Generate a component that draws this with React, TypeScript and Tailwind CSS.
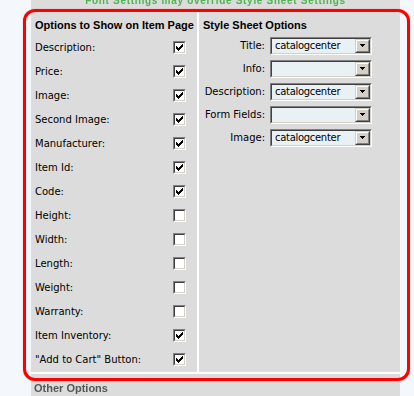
import React from "react";

const CHECK_PIXELS = [
  "......X",
  ".....XX",
  "X...XXX",
  "XX.XXX.",
  "XXXXX..",
  ".XXX...",
  "..X....",
];

function CheckMark() {
  return (
    <svg width="7" height="7" viewBox="0 0 7 7" shapeRendering="crispEdges">
      {CHECK_PIXELS.map((row, y) =>
        row.split("").map((c, x) => (c === "X" ? <rect key={x + "-" + y} x={x} y={y} width="1" height="1" fill="#000" /> : null))
      )}
    </svg>
  );
}

function Checkbox({ checked }: { checked: boolean }) {
  return (
    <span className="block w-[13px] h-[13px] border border-t-[#808080] border-l-[#808080] border-r-white border-b-white">
      <span className="flex w-full h-full items-center justify-center border border-t-[#404040] border-l-[#404040] border-r-[#d4d0c8] border-b-[#d4d0c8] bg-white">
        {checked && <CheckMark />}
      </span>
    </span>
  );
}

function Select({ value }: { value: string }) {
  return (
    <div className="w-[102px] h-[18px] border border-t-[#808080] border-l-[#808080] border-r-white border-b-white">
      <div className="flex h-full items-center border border-t-[#404040] border-l-[#404040] border-r-[#d4d0c8] border-b-[#d4d0c8] bg-[#eaf1f5]">
        <span className="flex-1 pl-[3px] text-[10px] leading-[14px] tracking-[-0.3px] text-black">{value}</span>
        <div className="h-full w-[15px] border border-t-[#d4d0c8] border-l-[#d4d0c8] border-r-[#404040] border-b-[#404040] bg-[#d4d0c8]">
          <div className="flex h-full items-center justify-center border border-t-white border-l-white border-r-[#808080] border-b-[#808080]">
            <svg width="5" height="3" viewBox="0 0 5 3" shapeRendering="crispEdges">
              <rect x="0" y="0" width="5" height="1" fill="#000" />
              <rect x="1" y="1" width="3" height="1" fill="#000" />
              <rect x="2" y="2" width="1" height="1" fill="#000" />
            </svg>
          </div>
        </div>
      </div>
    </div>
  );
}

const options = [
  { label: "Description:", on: true },
  { label: "Price:", on: true },
  { label: "Image:", on: true },
  { label: "Second Image:", on: true },
  { label: "Manufacturer:", on: true },
  { label: "Item Id:", on: true },
  { label: "Code:", on: true },
  { label: "Height:", on: false },
  { label: "Width:", on: false },
  { label: "Length:", on: false },
  { label: "Weight:", on: false },
  { label: "Warranty:", on: false },
  { label: "Item Inventory:", on: true },
  { label: '"Add to Cart" Button:', on: true },
];

const sheets = [
  { label: "Title:", value: "catalogcenter" },
  { label: "Info:", value: "" },
  { label: "Description:", value: "catalogcenter" },
  { label: "Form Fields:", value: "" },
  { label: "Image:", value: "catalogcenter" },
];

export default function App() {
  return (
    <div className="relative w-[414px] h-[396px] overflow-hidden bg-[#f4f7fb] font-['DejaVu_Sans',sans-serif] text-[10px] text-black">
      <div className="ml-[31px] flex h-full w-[369px] flex-col bg-[#dcdcdc]">
        {/* notice above the table, scrolled partly out of view */}
        <div className="h-[12px] overflow-hidden">
          <div className="mt-[-6px] text-center font-['Liberation_Sans',sans-serif] text-[10px] font-bold leading-[14px] tracking-[0.7px] text-[#4fb34f] blur-[0.5px]">
            Font Settings may override Style Sheet Settings
          </div>
        </div>

        <div className="flex h-[360px]">
          <div className="w-[166px] pt-[5px]">
            <div className="h-[16px] pl-[4px] font-['Liberation_Sans',sans-serif] text-[11px] font-bold leading-[16px]">Options to Show on Item Page</div>
            <div className="mt-[2px]">
              {options.map((o) => (
                <div key={o.label} className="flex h-[24px] items-center justify-between pl-[4px] pr-[11px]">
                  <span>{o.label}</span>
                  <Checkbox checked={o.on} />
                </div>
              ))}
            </div>
          </div>

          <div className="w-[2px] bg-white" />

          <div className="flex-1 pt-[5px] pl-[4px]">
            <div className="h-[16px] font-['Liberation_Sans',sans-serif] text-[11px] font-bold leading-[16px]">Style Sheet Options</div>
            <div className="mt-[1px] grid grid-cols-[62px_102px] gap-x-[5px]">
              {sheets.map((s) => (
                <React.Fragment key={s.label}>
                  <div className="flex h-[23px] items-center justify-end">{s.label}</div>
                  <div className="flex h-[23px] items-center">
                    <Select value={s.value} />
                  </div>
                </React.Fragment>
              ))}
            </div>
          </div>
        </div>

        <div className="h-[2px] bg-white" />

        <div className="flex-1 pt-[7px] pl-[3px]">
          <div className="font-['Liberation_Sans',sans-serif] text-[11px] font-bold leading-[14px] text-[#555] blur-[0.7px]">Other Options</div>
        </div>
      </div>

      {/* red highlight drawn over the panel */}
      <div className="pointer-events-none absolute left-[23px] top-[9px] h-[372px] w-[387px] rounded-[12px] border-[3px] border-[#ff0000] shadow-[0_0_1px_#ff6060]" />
    </div>
  );
}
